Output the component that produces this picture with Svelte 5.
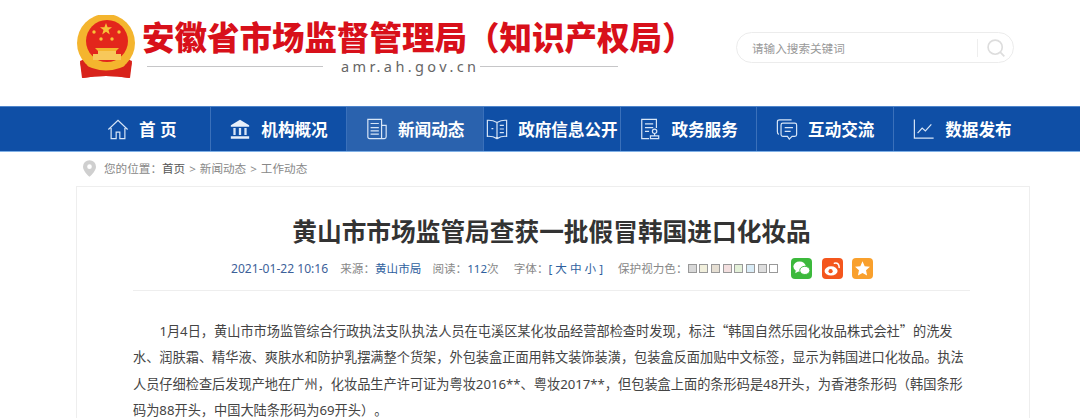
<script>
  const navItems = [
    { label: "首 页", icon: "home" },
    { label: "机构概况", icon: "bank" },
    { label: "新闻动态", icon: "news", active: true },
    { label: "政府信息公开", icon: "book" },
    { label: "政务服务", icon: "service" },
    { label: "互动交流", icon: "chat" },
    { label: "数据发布", icon: "chart" },
  ];
  const eyeColors = ["#d8d8d8", "#f1efdc", "#e6dfd3", "#f3dfdf", "#e4f1d9", "#d9ecf7", "#dedede", "#ffffff"];
</script>

<header class="top">
  <svg class="emblem" viewBox="0 0 60 64" aria-hidden="true">
    <path d="M4 46 L16 41 Q30 50 44 41 L56 46 L53 63 Q30 59 7 63 Z" fill="#d8231b" />
    <circle cx="30" cy="28" r="29" fill="#f4b52e" />
    <circle cx="31" cy="26" r="21" fill="#e3261c" />
    <path d="M8 45 Q30 60 52 45 L47 53 Q30 62 13 53 Z" fill="#f4b52e" />
    <path d="M4 47 Q30 64 56 47 L54 63 Q30 59 6 63 Z" fill="#d8231b" />
    <path d="M17 39 H45 V45 H17 Z M22 35 H40 V39 H22 Z" fill="#f7c85a" />
    <path d="M19 33 H43 L40 36 H22 Z" fill="#f4b52e" />
    <polygon points="30,8 31.6,12.2 36,12.2 32.5,15 33.8,19.5 30,16.8 26.2,19.5 27.5,15 24,12.2 28.4,12.2" fill="#f7c338" />
    <circle cx="18" cy="17" r="1.7" fill="#f7c338" />
    <circle cx="43" cy="17" r="1.7" fill="#f7c338" />
    <circle cx="25" cy="24" r="1.7" fill="#f7c338" />
    <circle cx="36" cy="24" r="1.7" fill="#f7c338" />
  </svg>
  <div class="brand">
    <div class="brand-name">安徽省市场监督管理局（知识产权局）</div>
    <div class="brand-url">
      <span class="rule first"></span>
      <span class="url">amr.ah.gov.cn</span>
      <span class="rule"></span>
    </div>
  </div>
  <div class="search">
    <span class="placeholder">请输入搜索关键词</span>
    <span class="search-sep"></span>
    <svg class="search-icon" viewBox="0 0 24 24" aria-hidden="true">
      <circle cx="11" cy="11" r="8.5" />
      <path d="M17 17 L22 22" />
    </svg>
  </div>
</header>

<nav class="nav">
  {#each navItems as item}
    <div class="nav-item" class:active={item.active}>
      <svg class="nav-icon" viewBox="0 0 24 24" aria-hidden="true">
        {#if item.icon === "home"}
          <path d="M1.5 12.5 L12 2.5 L22.5 12.5 M4.5 11 V22.5 H10 V15.5 H14 V22.5 H19.5 V11" />
        {:else if item.icon === "bank"}
          <path class="fill" d="M12 2 L22 8 V9.5 H2 V8 Z M2 20 H22 V22.5 H2 Z" />
          <path class="thick" d="M6 11 V18.5 M12 11 V18.5 M18 11 V18.5" />
        {:else if item.icon === "news"}
          <path d="M2 1.5 H17 V22.5 H4 Q2 22.5 2 20.5 Z M17 8 H22 V20.5 Q22 22.5 20 22.5 H17" />
          <path d="M5 6 H14 M5 10.5 H14 M5 14 H14 M5 17.5 H14" />
        {:else if item.icon === "book"}
          <path d="M12 5 Q7 2 1.5 2.5 V20 Q7 19.5 12 22.5 Q17 19.5 22.5 20 V2.5 Q17 2 12 5 Z M12 5 V22.5" />
          <path d="M6 11.5 H8 M15 8 H19.5 M15 12 H19.5 M15 16 H19.5" />
        {:else if item.icon === "service"}
          <path d="M19 11 V1.5 H3 V22.5 H11" />
          <path d="M6.5 6.5 H15.5 M6.5 10.5 H15.5 M6.5 14.5 H11" />
          <circle cx="17" cy="14.5" r="2.4" />
          <path d="M17 17 V19 M12.5 19.5 H21.5 V22.5 H12.5 Z" />
        {:else if item.icon === "chat"}
          <path d="M3 18 Q1.5 17 1.5 15 V4 Q1.5 2 4 2 H17" />
          <path d="M7.5 5.5 H20.5 Q22.5 5.5 22.5 7.5 V18 Q22.5 20 20.5 20 H17.5 L14.5 23 L12.5 20 H7.5 Q5.5 20 5.5 18 V7.5 Q5.5 5.5 7.5 5.5 Z" />
          <path d="M9.5 10.5 H18.5 M9.5 14.5 H16" />
        {:else}
          <path d="M1.5 1.5 V22 H22.5" />
          <path d="M5 16.5 L10 11 L13.5 14 L20 7" />
        {/if}
      </svg>
      <span class="nav-label">{item.label}</span>
    </div>
  {/each}
</nav>

<div class="crumbs">
  <svg class="pin" viewBox="0 0 14 18" aria-hidden="true">
    <path fill-rule="evenodd" d="M7 0 A7 7 0 0 1 14 7 C14 11 9.5 15.5 7 18 C4.5 15.5 0 11 0 7 A7 7 0 0 1 7 0 Z M7 4.5 A2.5 2.5 0 1 0 7 9.5 A2.5 2.5 0 1 0 7 4.5 Z" />
  </svg>
  <span>您的位置：</span><span class="dark">首页</span><span class="gt">&gt;</span><span>新闻动态</span><span class="gt">&gt;</span><span>工作动态</span>
</div>

<main class="card">
  <h1>黄山市市场监管局查获一批假冒韩国进口化妆品</h1>
  <div class="meta">
    <span class="time">2021-01-22 10:16</span>
    <span class="m1">来源：<b>黄山市局</b></span>
    <span class="m2">阅读：<b>112</b>次</span>
    <span class="m3">字体：<b class="size">[ 大 中 小 ]</b></span>
    <span class="m4">保护视力色：</span>
    <span class="swatches">
      {#each eyeColors as color}
        <i style="background:{color}"></i>
      {/each}
    </span>
    <span class="shares">
      <span class="share wechat">
        <svg viewBox="0 0 22 22" aria-hidden="true">
          <ellipse cx="9" cy="9" rx="6.5" ry="5.3" fill="#fff" />
          <ellipse cx="14.5" cy="13" rx="5.3" ry="4.3" fill="#fff" stroke="#3cb93c" stroke-width="1" />
          <path d="M5 13 L4.5 16 L8 14 Z" fill="#fff" />
        </svg>
      </span>
      <span class="share weibo">
        <svg viewBox="0 0 22 22" aria-hidden="true">
          <ellipse cx="9.5" cy="13.5" rx="6.8" ry="4.8" fill="#fff" />
          <circle cx="9" cy="13.8" r="2.2" fill="#f4561d" />
          <path d="M13 5.5 Q18 4.5 18 10" fill="none" stroke="#fff" stroke-width="1.6" stroke-linecap="round" />
        </svg>
      </span>
      <span class="share star">
        <svg viewBox="0 0 22 22" aria-hidden="true">
          <polygon points="11,3.5 13.3,8.6 18.8,9.2 14.7,12.9 15.8,18.3 11,15.6 6.2,18.3 7.3,12.9 3.2,9.2 8.7,8.6" fill="#fff" />
        </svg>
      </span>
    </span>
  </div>
  <p>1月4日，黄山市市场监管综合行政执法支队执法人员在屯溪区某化妆品经营部检查时发现，标注<span class="q">“</span>韩国自然乐园化妆品株式会社<span class="q">”</span>的洗发<br />水、润肤霜、精华液、爽肤水和防护乳摆满整个货架，外包装盒正面用韩文装饰装潢，包装盒反面加贴中文标签，显示为韩国进口化妆品。执法<br />人员仔细检查后发现产地在广州，化妆品生产许可证为粤妆2016**、粤妆2017**，但包装盒上面的条形码是48开头，为香港条形码（韩国条形<br />码为88开头，中国大陆条形码为69开头）。</p>
</main>

<style>
  :global(body) {
    margin: 0;
    background: #fff;
    overflow: hidden;
    font-family: "Noto Sans", "Noto Sans CJK SC", sans-serif;
  }

  .top {
    height: 106px;
    display: flex;
    align-items: flex-start;
    box-sizing: border-box;
    padding: 15px 0 0 76px;
  }
  .emblem {
    width: 60px;
    height: 64px;
    flex: none;
  }
  .brand {
    margin-left: 6px;
    width: 540px;
    flex: none;
  }
  .brand-name {
    font-size: 32.5px;
    font-weight: 900;
    line-height: 40px;
    padding-top: 3px;
    color: #d8101a;
    white-space: nowrap;
  }
  .brand-url {
    display: flex;
    align-items: center;
    height: 16px;
  }
  .rule {
    height: 1px;
    background: #c6c6c8;
    flex: none;
    width: 138px;
  }
  .rule.first {
    width: 176px;
    margin-left: 5px;
  }
  .url {
    margin: 0 1px 0 18px;
    font-size: 14.5px;
    line-height: 16px;
    letter-spacing: 3.4px;
    color: #666;
  }
  .search {
    margin: 17px 0 0 54px;
    width: 278px;
    height: 31px;
    flex: none;
    box-sizing: border-box;
    border: 1px solid #ececec;
    border-radius: 16px;
    display: flex;
    align-items: center;
    padding-left: 15px;
  }
  .placeholder {
    font-size: 11.6px;
    color: #999;
    flex: 1;
  }
  .search-sep {
    width: 1px;
    height: 18px;
    background: #eee;
  }
  .search-icon {
    width: 20px;
    height: 20px;
    margin: 0 7px 0 8px;
    fill: none;
    stroke: #ddd;
    stroke-width: 2;
  }

  .nav {
    height: 46px;
    box-sizing: border-box;
    background: #0f4fa6;
    border-top: 1px solid #4f85cb;
    border-bottom: 1px solid #7fb0e6;
    display: flex;
    padding-left: 74px;
  }
  .nav-item {
    width: 136.7px;
    flex: none;
    box-sizing: border-box;
    display: flex;
    align-items: center;
    justify-content: center;
    gap: 10px;
    color: #fff;
    border-right: 1px solid #3a70ba;
    white-space: nowrap;
  }
  .nav-item:last-child {
    border-right: 0;
  }
  .nav-item.active {
    background: #2a62ae;
  }
  .nav-icon {
    width: 22px;
    height: 22px;
    flex: none;
    fill: none;
    stroke: #d8e6f7;
    stroke-width: 1.3;
  }
  .nav-icon .fill {
    fill: #e8f0fa;
    stroke: none;
  }
  .nav-icon .thick {
    stroke-width: 2.5;
  }
  .nav-label {
    font-size: 16.6px;
    font-weight: 700;
  }

  .crumbs {
    height: 32px;
    display: flex;
    align-items: center;
    padding-left: 83px;
    font-size: 11.6px;
    color: #888;
  }
  .pin {
    width: 13px;
    height: 17px;
    fill: #cfcfcf;
    margin-right: 8px;
  }
  .dark {
    color: #555;
  }
  .gt {
    margin: 0 4px;
  }

  .card {
    margin: 2px 0 0 76px;
    width: 954px;
    box-sizing: border-box;
    border: 1px solid #eee;
    border-bottom: 0;
    padding: 0 59px 0 56px;
  }
  h1 {
    margin: 27px 0 0;
    font-size: 24.7px;
    font-weight: 700;
    line-height: 36px;
    color: #333;
    text-align: center;
  }
  .meta {
    display: flex;
    align-items: center;
    height: 32px;
    margin-top: 2px;
    padding-left: 98px;
    font-size: 11.6px;
    color: #888;
    border-bottom: 1px solid #eee;
    padding-bottom: 6px;
    white-space: nowrap;
  }
  .meta b {
    font-weight: 400;
    color: #2f5f9e;
  }
  .time {
    color: #3d6199;
    font-size: 12.1px;
  }
  .m1 { margin-left: 12px; }
  .m2 { margin-left: 11px; }
  .m3 { margin-left: 15px; }
  .m4 { margin-left: 15px; }
  .swatches {
    display: flex;
    gap: 2.7px;
  }
  .swatches i {
    width: 7px;
    height: 7px;
    border: 1px solid #999;
    display: block;
  }
  .shares {
    display: flex;
    gap: 9.5px;
    margin-left: 13px;
  }
  .share {
    width: 21px;
    height: 21px;
    border-radius: 4px;
    display: block;
  }
  .share svg {
    display: block;
    width: 21px;
    height: 21px;
  }
  .wechat { background: #3cb93c; }
  .weibo { background: #f4561d; }
  .star { background: #f9a02c; }

  p {
    margin: 27px 0 0;
    font-size: 13.2px;
    line-height: 26.4px;
    color: #444;
    text-indent: 2em;
    white-space: nowrap;
    text-spacing-trim: space-all;
  }
  .q {
    font-family: "Noto Sans CJK SC", sans-serif;
  }
</style>
